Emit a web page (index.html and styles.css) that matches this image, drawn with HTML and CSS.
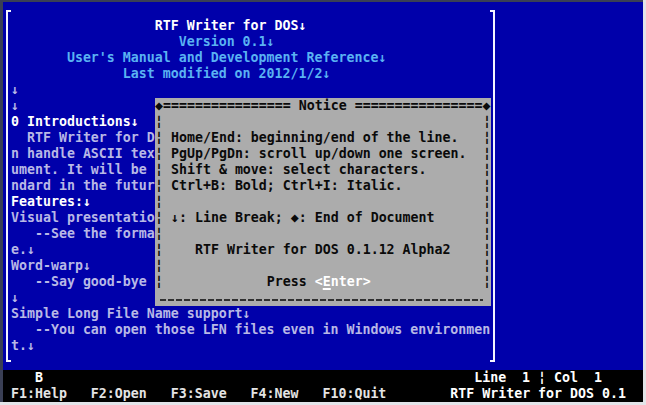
FILE: index.html
```html
<!DOCTYPE html>
<html>
<head>
<meta charset="utf-8">
<link rel="stylesheet" href="styles.css">
</head>
<body>
<div class="window">
  <div class="screen">
    <div class="doc">
      <div class="frame">
        <div class="row hi">                  RTF Writer for DOS↓</div>
        <div class="row ti">                     Version 0.1↓</div>
        <div class="row ti">       User's Manual and Development Reference↓</div>
        <div class="row ti">              Last modified on 2012/1/2↓</div>
        <div class="row">↓</div>
        <div class="row">↓</div>
        <div class="row hi">0 Introductions↓</div>
        <div class="row">  RTF Writer for D</div>
        <div class="row">n handle ASCII tex</div>
        <div class="row">ument. It will be</div>
        <div class="row">ndard in the futur</div>
        <div class="row hi">Features:↓</div>
        <div class="row">Visual presentatio</div>
        <div class="row">   --See the forma</div>
        <div class="row">e.↓</div>
        <div class="row">Word-warp↓</div>
        <div class="row">   --Say good-bye</div>
        <div class="row">↓</div>
        <div class="row">Simple Long File Name support↓</div>
        <div class="row">   --You can open those LFN files even in Windows environmen</div>
        <div class="row">t.↓</div>
      </div>
    </div>

    <div class="dialog">
      <div class="row">◆================ Notice ================◆</div>
      <div class="drow"><span class="bar">¦</span><span class="dtext"></span><span class="bar">¦</span></div>
      <div class="drow"><span class="bar">¦</span><span class="dtext"> Home/End: beginning/end of the line.</span><span class="bar">¦</span></div>
      <div class="drow"><span class="bar">¦</span><span class="dtext"> PgUp/PgDn: scroll up/down one screen.</span><span class="bar">¦</span></div>
      <div class="drow"><span class="bar">¦</span><span class="dtext"> Shift &amp; move: select characters.</span><span class="bar">¦</span></div>
      <div class="drow"><span class="bar">¦</span><span class="dtext"> Ctrl+B: Bold; Ctrl+I: Italic.</span><span class="bar">¦</span></div>
      <div class="drow"><span class="bar">¦</span><span class="dtext"></span><span class="bar">¦</span></div>
      <div class="drow"><span class="bar">¦</span><span class="dtext"> ↓: Line Break; ◆: End of Document</span><span class="bar">¦</span></div>
      <div class="drow"><span class="bar">¦</span><span class="dtext"></span><span class="bar">¦</span></div>
      <div class="drow"><span class="bar">¦</span><span class="dtext">    RTF Writer for DOS 0.1.12 Alpha2</span><span class="bar">¦</span></div>
      <div class="drow"><span class="bar">¦</span><span class="dtext"></span><span class="bar">¦</span></div>
      <div class="drow"><span class="bar">¦</span><span class="dtext">             Press <span class="key">&lt;<u>E</u>nter&gt;</span></span><span class="bar">¦</span></div>
      <div class="dbottom"><div class="dash"></div></div>
    </div>

    <div class="status">
      <div class="row"><span class="ind4 hi">B</span><span class="ind54 hi">Line  1 ¦ Col  1</span></div>
      <div class="row"> F1:Help   F2:Open   F3:Save   F4:New   F10:Quit<span class="ind8 hi">RTF Writer for DOS 0.1</span></div>
    </div>
  </div>
</div>
</body>
</html>
```

FILE: styles.css
```css
* { box-sizing: border-box; margin: 0; padding: 0; }
html, body { width: 646px; height: 405px; overflow: hidden; }
body {
  background: #e2e4e8;
  font-family: "DejaVu Sans Mono", "Liberation Mono", monospace;
  font-weight: bold;
  font-size: 13.288px;
  line-height: 16px;
}
.window {
  width: 643px;
  height: 402px;
  border-top: 2px solid #3a3f55;
  border-left: 3px solid #3a3f55;
}
.screen {
  width: 640px;
  height: 400px;
  background: #0000aa;
  position: relative;
  display: flex;
  flex-direction: column;
  color: #b8b8e6;
}
.row { height: 16px; white-space: pre; }
.hi { color: #ffffff; }
.ti { color: #5ab2f2; }
.doc { height: 368px; padding: 8px 0 0 3px; }
.frame {
  width: 489px;
  height: 352px;
  border-left: 2px solid #f4f4ff;
  border-right: 2px solid #f4f4ff;
  padding: 8px 0 0 3px;
  background:
    linear-gradient(#f4f4ff, #f4f4ff) left top / 3px 2px no-repeat,
    linear-gradient(#f4f4ff, #f4f4ff) right top / 3px 2px no-repeat,
    linear-gradient(#f4f4ff, #f4f4ff) left bottom / 3px 2px no-repeat,
    linear-gradient(#f4f4ff, #f4f4ff) right bottom / 3px 2px no-repeat;
}
.dialog {
  position: absolute;
  left: 152px;
  top: 96px;
  width: 336px;
  height: 208px;
  background: #acacac;
  color: #0a0a0a;
}
.drow { display: flex; height: 16px; }
.bar { width: 8px; white-space: pre; }
.dtext { flex: 1; white-space: pre; }
.key { color: #ffffff; }
.key u { text-decoration: underline; text-decoration-thickness: 2px; text-underline-offset: 2px; }
.dbottom { height: 16px; padding: 9px 8px 0 5px; }
.dash {
  height: 2px;
  background: repeating-linear-gradient(90deg, #303030 0 6px, transparent 6px 8px);
}
.status {
  height: 32px;
  background: #000000;
  color: #e4e4e4;
}
.ind4 { margin-left: 4ch; }
.ind54 { margin-left: 54ch; }
.ind8 { margin-left: 8ch; }
```
